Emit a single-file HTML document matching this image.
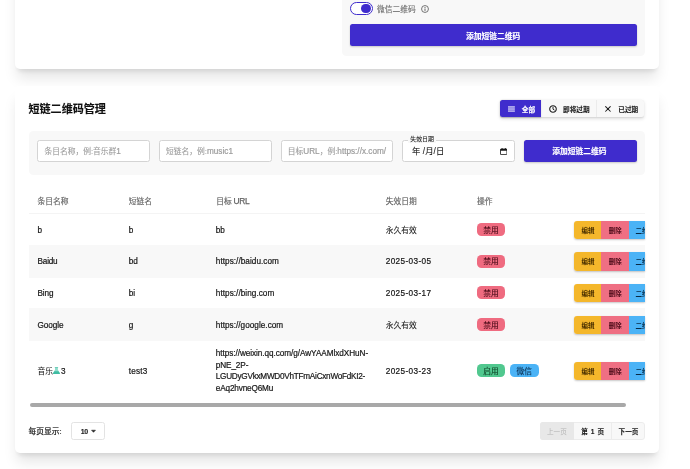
<!DOCTYPE html>
<html lang="zh-CN">
<head>
<meta charset="utf-8">
<title>短链二维码管理</title>
<style>
*{box-sizing:border-box;margin:0;padding:0}
html,body{width:690px;height:469px;overflow:hidden;background:#fff}
body{position:relative;font-family:"Liberation Sans","Noto Sans CJK SC",sans-serif;font-size:7.75px;color:#1a1a1a}
.root{position:absolute;left:0;top:0;width:690px;height:469px;overflow:hidden;will-change:transform}
.abs{position:absolute}
.card{position:absolute;background:#fff;border-radius:5px;box-shadow:0 11.4px 14.3px -2.9px rgba(0,0,0,.1),0 4.6px 5.7px -3.4px rgba(0,0,0,.1)}
.panel{position:absolute;background:#f8f8f8;border-radius:4.5px}
.box{position:absolute}
.btn{position:absolute;background:#3f2ccd;border-radius:2.5px;box-shadow:0 1px 2px rgba(0,0,0,.2)}
.inp{position:absolute;height:22.1px;top:139.6px;width:112.6px;background:#fff;border:1px solid #d4d4d4;border-radius:2.5px}
.t{position:absolute;white-space:nowrap;color:#161616;-webkit-text-stroke:.08px #161616}
.tl{position:absolute;white-space:nowrap;color:#161616;-webkit-text-stroke:.2px #161616}
.ph{position:absolute;white-space:nowrap;color:#9c9c9c;-webkit-text-stroke:.1px #9c9c9c}
.th{position:absolute;white-space:nowrap;color:#646464;-webkit-text-stroke:.15px #646464}
.w{position:absolute;white-space:nowrap;color:#fff;font-weight:700;-webkit-text-stroke:.15px #fff}
.k{position:absolute;white-space:nowrap;color:#1c1c1c;font-weight:700;-webkit-text-stroke:.12px #1c1c1c}
.l{font-size:8.2px;-webkit-text-stroke-width:.2px}
.bg{position:absolute;left:28.7px;width:616.1px;background:#f8f8f8}
.tag{position:absolute;height:13.3px;width:28.3px;border-radius:4.5px}
.acts{position:absolute;left:574.4px;height:18.2px;width:70.4px;overflow:hidden;border-radius:3px 0 0 3px;box-shadow:0 1px 2px rgba(0,0,0,.22)}
.acts i{position:absolute;top:0;height:18.2px;display:block}
</style>
</head>
<body>
<div class="root">
<div class="card" style="left:15.2px;top:-60px;width:643.9px;height:129px"></div>
<div class="panel" style="left:342px;top:-60px;width:302.8px;height:115.5px"></div>
<div class="abs" style="left:350.2px;top:2px;width:22.4px;height:13.4px;border:1px solid #3f2ccd;border-radius:7px;background:#fff"></div>
<div class="abs" style="left:361.2px;top:3.9px;width:9.6px;height:9.6px;border-radius:50%;background:#3f2ccd"></div>
<svg class="abs" style="left:420.6px;top:4.9px" width="8" height="8" viewBox="0 0 16 16"><circle cx="8" cy="8" r="6.9" fill="none" stroke="#555" stroke-width="1.6"/><rect x="7.1" y="7" width="1.8" height="4.8" fill="#555"/><rect x="7.1" y="4" width="1.8" height="1.9" fill="#555"/></svg>
<div class="btn" style="left:350.2px;top:24.4px;width:286.5px;height:22px"></div>
<div class="ph" style="left:377px;top:4.00px;font-size:7.75px;line-height:11px;height:11px;color:#6a6a6a;-webkit-text-stroke-color:#6a6a6a">微信二维码</div>
<div class="w" style="left:466px;top:31.00px;font-size:7.75px;line-height:11px;height:11px">添加短链二维码</div>
<div class="card" style="left:15.2px;top:86px;width:643.9px;height:367.3px"></div>
<div class="k" style="left:28.5px;top:102.00px;font-size:11.07px;line-height:14px;height:14px;color:#111;-webkit-text-stroke:.15px #111">短链二维码管理</div>
<div class="abs" style="left:499.9px;top:100.1px;width:144.5px;height:16.8px;border-radius:2.5px;box-shadow:0 1.3px 3.5px rgba(0,0,0,.13),0 .5px 1px rgba(0,0,0,.05);background:#f8f8f8"></div>
<div class="abs" style="left:499.9px;top:100.1px;width:41.5px;height:17.1px;background:#3f2ccd;border-radius:2.5px 0 0 2.5px;box-shadow:0 .5px 1.5px rgba(0,0,0,.2)"></div>
<div class="abs" style="left:596.2px;top:100.1px;width:1px;height:16.8px;background:#ebebeb"></div>
<svg class="abs" style="left:508.2px;top:105.9px" width="6.8" height="6.1" viewBox="0 0 14 12.6"><rect x="0" y="0" width="14" height="12.6" fill="#7468dd"/><rect x="0" y="0" width="14" height="3.5" fill="#aca4eb"/><rect x="0" y="4.55" width="14" height="3.5" fill="#aca4eb"/><rect x="0" y="9.1" width="14" height="3.5" fill="#aca4eb"/></svg>
<svg class="abs" style="left:549.3px;top:104.5px" width="8" height="8" viewBox="0 0 16 16"><circle cx="8" cy="8" r="6.6" fill="none" stroke="#1c1c1c" stroke-width="2.1"/><path d="M8 4.4V8.3L10.4 9.9" fill="none" stroke="#1c1c1c" stroke-width="1.9" stroke-linecap="round"/></svg>
<svg class="abs" style="left:605.2px;top:105.8px" width="5.9" height="5.9" viewBox="0 0 12 12"><path d="M1.3 1.3L10.7 10.7M10.7 1.3L1.3 10.7" stroke="#1c1c1c" stroke-width="2.1" fill="none" stroke-linecap="round"/></svg>
<div class="w" style="left:521.8px;top:105.00px;font-size:6.64px;line-height:9px;height:9px">全部</div>
<div class="k" style="left:563.1px;top:105.00px;font-size:6.64px;line-height:9px;height:9px">即将过期</div>
<div class="k" style="left:618.3px;top:105.00px;font-size:6.64px;line-height:9px;height:9px">已过期</div>
<div class="panel" style="left:28.7px;top:131.1px;width:616.1px;height:44px"></div>
<div class="inp" style="left:37.3px"></div>
<div class="inp" style="left:159px"></div>
<div class="inp" style="left:280.7px;overflow:hidden"><div class="ph" style="left:6.1px;top:5.40px;font-size:7.75px;line-height:11px;height:11px">目标<span class="l">URL</span>，例:<span class="l">https://x.com/</span></div></div>
<div class="inp" style="left:402.3px"></div>
<div class="abs" style="left:407.8px;top:134.6px;height:8px;width:28.5px;background:#f8f8f8"></div>
<svg class="abs" style="left:499.9px;top:147.6px" width="7.4" height="7" viewBox="0 0 16 15"><rect x="1" y="2.2" width="14" height="12" rx="1.2" fill="none" stroke="#111" stroke-width="1.8"/><rect x="1" y="2.2" width="14" height="3.6" fill="#111"/><rect x="3.6" y="0" width="1.8" height="3" fill="#111"/><rect x="10.6" y="0" width="1.8" height="3" fill="#111"/></svg>
<div class="btn" style="left:524.1px;top:139.7px;width:112.6px;height:22px"></div>
<div class="ph" style="left:44.4px;top:146.00px;font-size:7.75px;line-height:11px;height:11px">条目名称，例:音乐群<span class="l">1</span></div>
<div class="ph" style="left:166.1px;top:146.00px;font-size:7.75px;line-height:11px;height:11px">短链名，例:<span class="l">music1</span></div>
<div class="t" style="left:412px;top:145.00px;font-size:8.3px;line-height:12px;height:12px;letter-spacing:.1px">年 /月/日</div>
<div class="t" style="left:410.3px;top:135.00px;font-size:5.9px;line-height:8px;height:8px;color:#2a2a2a;-webkit-text-stroke:.1px #2a2a2a">失效日期</div>
<div class="w" style="left:552.3px;top:146.00px;font-size:7.75px;line-height:11px;height:11px">添加短链二维码</div>
<div class="th" style="left:37.5px;top:196.00px;font-size:7.75px;line-height:11px;height:11px">条目名称</div>
<div class="th" style="left:128.75px;top:196.00px;font-size:7.75px;line-height:11px;height:11px">短链名</div>
<div class="th" style="left:216.25px;top:196.00px;font-size:7.75px;line-height:11px;height:11px">目标<span style="font-size:8.4px;letter-spacing:-.3px;word-spacing:-.2px;-webkit-text-stroke-width:.25px"> URL</span></div>
<div class="th" style="left:385.75px;top:196.00px;font-size:7.75px;line-height:11px;height:11px">失效日期</div>
<div class="th" style="left:477px;top:196.00px;font-size:7.75px;line-height:11px;height:11px">操作</div>
<div class="abs" style="left:28.7px;top:213px;width:616.1px;height:1px;background:#f4f4f4"></div>
<div class="tl" style="left:37.5px;top:225.00px;font-size:8.2px;line-height:11px;height:11px">b</div>
<div class="tl" style="left:128.75px;top:225.00px;font-size:8.2px;line-height:11px;height:11px">b</div>
<div class="tl" style="left:215.8px;top:225.00px;font-size:8.2px;line-height:11px;height:11px">bb</div>
<div class="t" style="left:385.75px;top:225.00px;font-size:7.75px;line-height:11px;height:11px">永久有效</div>
<div class="tag" style="left:476.9px;top:223.05px;background:#ef6b80"></div>
<div class="t" style="left:483.3px;top:225.00px;font-size:7.75px;line-height:11px;height:11px;color:#4d0d1a;-webkit-text-stroke:.15px #4d0d1a">禁用</div>
<div class="acts" style="top:220.90px"><i style="left:0;width:27px;background:#f4b72b"></i><i style="left:27px;width:27.3px;background:#ef6f83"></i><i style="left:54.3px;width:40px;background:#4bb3f6"></i></div>
<div class="k" style="left:581.6px;top:226.00px;font-size:6.5px;line-height:9px;height:9px;color:#4a3000;font-weight:700;-webkit-text-stroke:0">编辑</div>
<div class="k" style="left:608.7px;top:226.00px;font-size:6.5px;line-height:9px;height:9px;color:#4a0a18;font-weight:700;-webkit-text-stroke:0">删除</div>
<div class="abs" style="left:628.7px;top:220.90px;width:16.1px;height:18.2px;overflow:hidden"><div class="k" style="left:6.8px;top:-7.00px;font-size:6.5px;line-height:9px;height:9px;color:#082a45;font-weight:700;-webkit-text-stroke:0;top:5.10px">二维码</div></div>
<div class="bg" style="top:245.05px;height:32.55px"></div>
<div class="tl" style="left:37.5px;top:256.00px;font-size:8.2px;line-height:11px;height:11px;letter-spacing:-0.194px">Baidu</div>
<div class="tl" style="left:128.75px;top:256.00px;font-size:8.2px;line-height:11px;height:11px">bd</div>
<div class="tl" style="left:215.8px;top:256.00px;font-size:8.2px;line-height:11px;height:11px;letter-spacing:0.045px">https://baidu.com</div>
<div class="tl" style="left:385.75px;top:256.00px;font-size:8.2px;line-height:11px;height:11px;letter-spacing:0.376px">2025-03-05</div>
<div class="tag" style="left:476.9px;top:254.55px;background:#ef6b80"></div>
<div class="t" style="left:483.3px;top:256.00px;font-size:7.75px;line-height:11px;height:11px;color:#4d0d1a;-webkit-text-stroke:.15px #4d0d1a">禁用</div>
<div class="acts" style="top:252.40px"><i style="left:0;width:27px;background:#f4b72b"></i><i style="left:27px;width:27.3px;background:#ef6f83"></i><i style="left:54.3px;width:40px;background:#4bb3f6"></i></div>
<div class="k" style="left:581.6px;top:257.00px;font-size:6.5px;line-height:9px;height:9px;color:#4a3000;font-weight:700;-webkit-text-stroke:0">编辑</div>
<div class="k" style="left:608.7px;top:257.00px;font-size:6.5px;line-height:9px;height:9px;color:#4a0a18;font-weight:700;-webkit-text-stroke:0">删除</div>
<div class="abs" style="left:628.7px;top:252.40px;width:16.1px;height:18.2px;overflow:hidden"><div class="k" style="left:6.8px;top:-7.00px;font-size:6.5px;line-height:9px;height:9px;color:#082a45;font-weight:700;-webkit-text-stroke:0;top:4.60px">二维码</div></div>
<div class="tl" style="left:37.5px;top:288.00px;font-size:8.2px;line-height:11px;height:11px;letter-spacing:-0.140px">Bing</div>
<div class="tl" style="left:128.75px;top:288.00px;font-size:8.2px;line-height:11px;height:11px">bi</div>
<div class="tl" style="left:215.8px;top:288.00px;font-size:8.2px;line-height:11px;height:11px;letter-spacing:0.045px">https://bing.com</div>
<div class="tl" style="left:385.75px;top:288.00px;font-size:8.2px;line-height:11px;height:11px;letter-spacing:0.376px">2025-03-17</div>
<div class="tag" style="left:476.9px;top:286.05px;background:#ef6b80"></div>
<div class="t" style="left:483.3px;top:288.00px;font-size:7.75px;line-height:11px;height:11px;color:#4d0d1a;-webkit-text-stroke:.15px #4d0d1a">禁用</div>
<div class="acts" style="top:283.90px"><i style="left:0;width:27px;background:#f4b72b"></i><i style="left:27px;width:27.3px;background:#ef6f83"></i><i style="left:54.3px;width:40px;background:#4bb3f6"></i></div>
<div class="k" style="left:581.6px;top:289.00px;font-size:6.5px;line-height:9px;height:9px;color:#4a3000;font-weight:700;-webkit-text-stroke:0">编辑</div>
<div class="k" style="left:608.7px;top:289.00px;font-size:6.5px;line-height:9px;height:9px;color:#4a0a18;font-weight:700;-webkit-text-stroke:0">删除</div>
<div class="abs" style="left:628.7px;top:283.90px;width:16.1px;height:18.2px;overflow:hidden"><div class="k" style="left:6.8px;top:-7.00px;font-size:6.5px;line-height:9px;height:9px;color:#082a45;font-weight:700;-webkit-text-stroke:0;top:5.10px">二维码</div></div>
<div class="bg" style="top:308.25px;height:32.45px"></div>
<div class="tl" style="left:37.5px;top:320.00px;font-size:8.2px;line-height:11px;height:11px;letter-spacing:-0.074px">Google</div>
<div class="tl" style="left:128.75px;top:320.00px;font-size:8.2px;line-height:11px;height:11px">g</div>
<div class="tl" style="left:215.8px;top:320.00px;font-size:8.2px;line-height:11px;height:11px;letter-spacing:0.028px">https://google.com</div>
<div class="t" style="left:385.75px;top:320.00px;font-size:7.75px;line-height:11px;height:11px">永久有效</div>
<div class="tag" style="left:476.9px;top:317.65px;background:#ef6b80"></div>
<div class="t" style="left:483.3px;top:320.00px;font-size:7.75px;line-height:11px;height:11px;color:#4d0d1a;-webkit-text-stroke:.15px #4d0d1a">禁用</div>
<div class="acts" style="top:315.50px"><i style="left:0;width:27px;background:#f4b72b"></i><i style="left:27px;width:27.3px;background:#ef6f83"></i><i style="left:54.3px;width:40px;background:#4bb3f6"></i></div>
<div class="k" style="left:581.6px;top:321.00px;font-size:6.5px;line-height:9px;height:9px;color:#4a3000;font-weight:700;-webkit-text-stroke:0">编辑</div>
<div class="k" style="left:608.7px;top:321.00px;font-size:6.5px;line-height:9px;height:9px;color:#4a0a18;font-weight:700;-webkit-text-stroke:0">删除</div>
<div class="abs" style="left:628.7px;top:315.50px;width:16.1px;height:18.2px;overflow:hidden"><div class="k" style="left:6.8px;top:-7.00px;font-size:6.5px;line-height:9px;height:9px;color:#082a45;font-weight:700;-webkit-text-stroke:0;top:5.50px">二维码</div></div>
<div class="t" style="left:37.6px;top:366.00px;font-size:7.75px;line-height:11px;height:11px">音乐<svg width="6.9" height="7.4" viewBox="0 0 14 15" style="vertical-align:-.2px;margin:0 .7px 0 .2px"><path d="M4.1 .8h5.8v4.6l3.7 6.4a2 2 0 0 1-1.7 3H2.1a2 2 0 0 1-1.7-3l3.7-6.4z" fill="#8fdccb"/><path d="M2.9 8.4h8.2l2.5 3.6a2 2 0 0 1-1.7 2.8H2.1a2 2 0 0 1-1.7-2.8z" fill="#3fbca2"/><rect x="3.3" y="0" width="7.4" height="1.9" rx=".9" fill="#6fcdb9"/></svg><span class="l">3</span></div>
<div class="tl" style="left:128.75px;top:366.00px;font-size:8.2px;line-height:11px;height:11px;letter-spacing:0.185px">test3</div>
<div class="tl" style="left:215.8px;top:348.00px;font-size:8.2px;line-height:11px;height:11px;letter-spacing:-0.056px">https://weixin.qq.com/g/AwYAAMlxdXHuN-</div>
<div class="tl" style="left:215.8px;top:360.00px;font-size:8.2px;line-height:11px;height:11px;letter-spacing:-0.110px">pNE_2P-</div>
<div class="tl" style="left:215.8px;top:371.00px;font-size:8.2px;line-height:11px;height:11px;letter-spacing:-0.258px">LGUDyGVkxMWD0VhTFmAiCxnWoFdKI2-</div>
<div class="tl" style="left:215.8px;top:383.00px;font-size:8.2px;line-height:11px;height:11px;letter-spacing:-0.147px">eAq2hvneQ6Mu</div>
<div class="tl" style="left:385.75px;top:366.00px;font-size:8.2px;line-height:11px;height:11px;letter-spacing:0.376px">2025-03-23</div>
<div class="tag" style="left:476.9px;top:363.85px;background:#51c88f"></div><div class="tag" style="left:510.2px;top:363.85px;width:28.4px;background:#4bb3f6"></div>
<div class="t" style="left:483.3px;top:366.00px;font-size:7.75px;line-height:11px;height:11px;color:#124a2c;-webkit-text-stroke:.15px #124a2c">启用</div>
<div class="t" style="left:516.6px;top:366.00px;font-size:7.75px;line-height:11px;height:11px;color:#0e375c;-webkit-text-stroke:.15px #0e375c">微信</div>
<div class="acts" style="top:361.70px"><i style="left:0;width:27px;background:#f4b72b"></i><i style="left:27px;width:27.3px;background:#ef6f83"></i><i style="left:54.3px;width:40px;background:#4bb3f6"></i></div>
<div class="k" style="left:581.6px;top:367.00px;font-size:6.5px;line-height:9px;height:9px;color:#4a3000;font-weight:700;-webkit-text-stroke:0">编辑</div>
<div class="k" style="left:608.7px;top:367.00px;font-size:6.5px;line-height:9px;height:9px;color:#4a0a18;font-weight:700;-webkit-text-stroke:0">删除</div>
<div class="abs" style="left:628.7px;top:361.70px;width:16.1px;height:18.2px;overflow:hidden"><div class="k" style="left:6.8px;top:-7.00px;font-size:6.5px;line-height:9px;height:9px;color:#082a45;font-weight:700;-webkit-text-stroke:0;top:5.30px">二维码</div></div>
<div class="abs" style="left:30.2px;top:402.9px;width:595.8px;height:4.2px;border-radius:2.1px;background:#a8a8a8"></div>
<div class="t" style="left:28.5px;top:426.00px;font-size:7.75px;line-height:11px;height:11px;-webkit-text-stroke-width:.2px">每页显示:</div>
<div class="abs" style="left:70.8px;top:422.3px;width:34.1px;height:17.7px;border:1px solid #e3e3e3;border-radius:2.5px;background:#fff"></div>
<svg class="abs" style="left:90.5px;top:429.3px" width="5" height="4.2" viewBox="0 0 12 10"><path d="M1.2 2.8h9.6L6 8z" fill="#222" stroke="#222" stroke-width="1.2" stroke-linejoin="round"/></svg>
<div class="abs" style="left:540px;top:422.3px;width:104.8px;height:17.5px;border-radius:3px;border:1px solid #ececec;background:#f8f8f8"></div>
<div class="abs" style="left:540px;top:422.3px;width:34px;height:17.5px;background:#e8e8e8;border-radius:3px 0 0 3px"></div>
<div class="abs" style="left:611.3px;top:422.3px;width:1px;height:17.5px;background:#ececec"></div>
<div class="k" style="left:80.7px;top:427.00px;font-size:7px;line-height:9px;height:9px;letter-spacing:-.3px">10</div>
<div class="t" style="left:547px;top:427.00px;font-size:6.64px;line-height:9px;height:9px;color:#b5b5b5;-webkit-text-stroke:0">上一页</div>
<div class="k" style="left:581.2px;top:427.00px;font-size:6.64px;line-height:9px;height:9px;word-spacing:1.2px">第 1 页</div>
<div class="k" style="left:618.6px;top:427.00px;font-size:6.64px;line-height:9px;height:9px">下一页</div>
</div>
</body>
</html>
